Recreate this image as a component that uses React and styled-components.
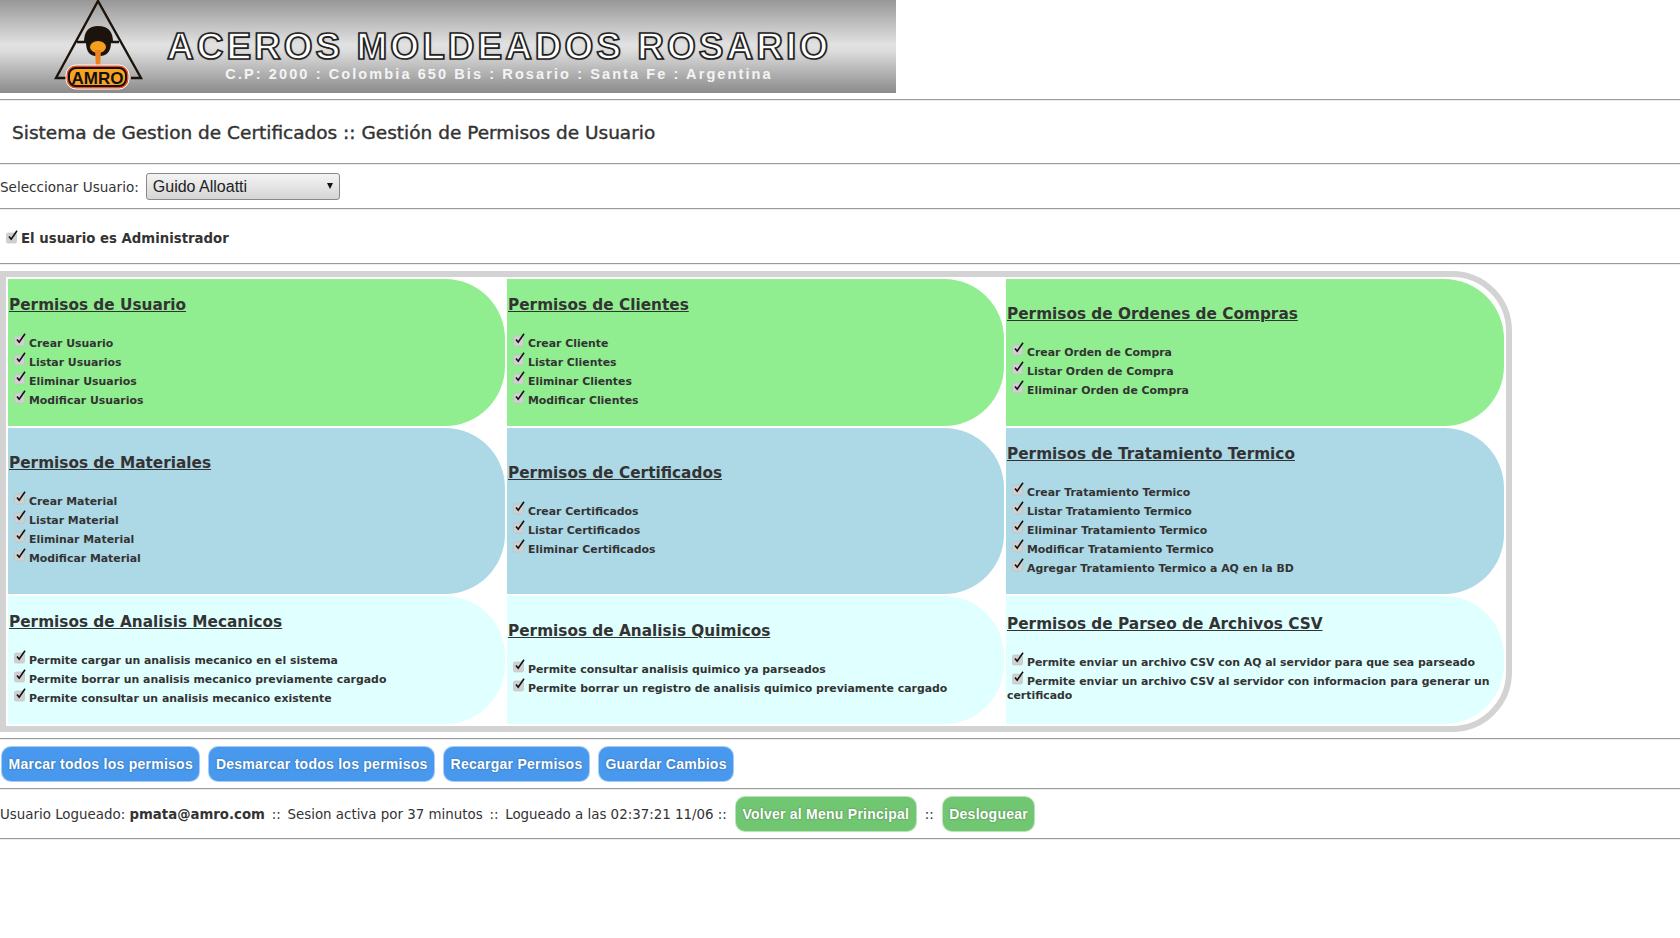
import React from 'react';
import styled, { createGlobalStyle } from 'styled-components';

const GlobalStyle = createGlobalStyle`
  html, body {
    margin: 0;
    padding: 0;
    background: #fff;
    color: #333;
    font-family: "DejaVu Sans", Verdana, sans-serif;
  }
  * { box-sizing: border-box; }
`;

const Banner = styled.header`
  width: 896px;
  height: 93px;
  display: flex;
  align-items: flex-start;
  padding-left: 54px;
  overflow: hidden;
  background: linear-gradient(180deg, #979797 0%, #e2e2e2 48%, #dcdcdc 55%, #8b8b8b 100%);
`;

const BannerText = styled.div`
  display: flex;
  flex-direction: column;
  align-items: center;
  margin-left: 20px;
  padding-top: 27px;
  width: 670px;
`;

const BannerName = styled.div`
  font-family: "Liberation Sans", Arial, sans-serif;
  font-weight: 700;
  font-size: 37px;
  line-height: 40px;
  letter-spacing: 3px;
  white-space: nowrap;
  color: #fff;
  -webkit-text-stroke: 1.7px #222;
  text-shadow: 0 0 2px #777;
`;

const BannerAddress = styled.div`
  font-family: "Liberation Sans", Arial, sans-serif;
  font-weight: 700;
  font-size: 14.5px;
  line-height: 16px;
  letter-spacing: 2.1px;
  white-space: nowrap;
  color: #f4f4f4;
  margin-top: -1px;
`;

const Rule = styled.hr`
  margin: ${(p) => p.$top || 0}px 0 ${(p) => p.$bottom || 0}px;
  border: 0;
  height: 2px;
  border-top: 1px solid #9a9a9a;
  border-bottom: 1px solid #eee;
`;

const Title = styled.h1`
  margin: 0;
  padding-left: 12px;
  height: 62px;
  display: flex;
  align-items: center;
  font-size: 18.5px;
  font-weight: 400;
  -webkit-text-stroke: 0.4px #333;
`;

const UserRow = styled.div`
  display: flex;
  align-items: center;
  gap: 7px;
  height: 43px;
  font-size: 13.55px;
`;

const SelectBox = styled.div`
  position: relative;
  width: 194px;
  height: 27px;
  padding-left: 6px;
  display: flex;
  align-items: center;
  font-family: "Liberation Sans", Arial, sans-serif;
  font-size: 16px;
  color: #222;
  border: 1px solid #888;
  border-radius: 3px;
  background: linear-gradient(180deg, #f4f4f4, #d5d5d5);

  &::after {
    content: '';
    position: absolute;
    right: 6px;
    top: 9px;
    border-left: 3px solid transparent;
    border-right: 3px solid transparent;
    border-top: 6px solid #111;
  }
`;

const AdminRow = styled.div`
  display: flex;
  align-items: center;
  height: 53px;
  padding: 3px 0 0 6px;
  font-size: 13.3px;
  font-weight: 700;
`;

const PermGrid = styled.section`
  width: 1512px;
  height: 461px;
  display: grid;
  grid-template-columns: 497px 497px 498px;
  grid-template-rows: 147px 166px 128px;
  gap: 2px;
  padding: 2px;
  border: 6px solid #d3d3d3;
  border-radius: 0 60px 60px 0;
`;

const Cell = styled.div`
  background: ${(p) => p.$bg};
  border-radius: 0 60px 60px 0;
  display: flex;
  flex-direction: column;
  justify-content: center;
  padding: 0 2px 2px 1px;
`;

const CellTitle = styled.h2`
  margin: 0 0 17px;
  font-size: 15.3px;
  line-height: 19px;
  font-weight: 700;
  text-decoration: underline;
`;

const PermLine = styled.div`
  font-size: 10.9px;
  line-height: 14px;
  font-weight: 700;
  padding-top: 5px;
  text-indent: 5px;
`;

const Tick = styled.svg`
  width: 13px;
  height: 13px;
  margin: -4px 2px 0 0;
  vertical-align: 1px;
  overflow: visible;
`;

const ButtonRow = styled.div`
  display: flex;
  gap: 8px;
  height: 36px;
  padding-left: 1px;
`;

const Pill = styled.button`
  height: 36px;
  padding: 0 6.5px;
  border: 1px solid rgba(255, 255, 255, 0.5);
  border-radius: 10px;
  background: ${(p) => p.$bg};
  color: #fff;
  font-family: "Liberation Sans", Arial, sans-serif;
  font-size: 14px;
  font-weight: 700;
  letter-spacing: 0.25px;
  text-shadow: 0 0 2px rgba(0, 0, 0, 0.4);
  white-space: nowrap;
`;

const FooterRow = styled.div`
  display: flex;
  align-items: center;
  gap: 8px;
  height: 36px;
  font-size: 13.4px;
  white-space: pre;
`;

const UserMail = styled.b`
  font-size: 13.3px;
`;

const Sep = styled.span`
  margin: 0 2.5px;
`;

const checkIcon = (
  <>
    <rect x="0.5" y="3" width="10" height="10" rx="1.5" fill="#d0d0d0" stroke="#c0c0c0" strokeWidth="0.6" />
    <path d="M3 6.4 L5.2 9.2 L11 0.8" fill="none" stroke="#111" strokeWidth="1.6" />
  </>
);

const Check = () => <Tick viewBox="0 0 13 13">{checkIcon}</Tick>;

const Logo = () => (
  <svg width="90" height="93" viewBox="0 0 90 93" style={{ flexShrink: 0 }}>
    <path d="M12 78 L2 78 L44 1 L87 78 L77 78" fill="none" stroke="#1c140c" strokeWidth="2.4" />
    <path d="M23 42 L65 42" stroke="#1c140c" strokeWidth="2.5" />
    <path d="M30 42 Q30 26 44 26 Q59 26 59 42 Z" fill="#1c140c" />
    <path d="M32 42 L57 42 Q57 55 47 56 L41 56 Q32 55 32 42 Z" fill="#1c140c" />
    <ellipse cx="44" cy="47" rx="8" ry="6" fill="#f5a01c" />
    <path d="M41 50 L47 50 L46 68 L42 68 Z" fill="#f0801c" />
    <rect x="12" y="65" width="63" height="24" rx="10" fill="#ee4f1a" stroke="#fff" strokeWidth="1" />
    <rect x="15" y="68" width="57" height="18" rx="7" fill="#f9a21f" stroke="#111" strokeWidth="2" />
    <text x="43.5" y="83.5" textAnchor="middle" fontFamily="Liberation Sans" fontWeight="700" fontSize="17" fill="#111">AMRO</text>
  </svg>
);

const cells = [
  { bg: '#90ee90', title: 'Permisos de Usuario', items: ['Crear Usuario', 'Listar Usuarios', 'Eliminar Usuarios', 'Modificar Usuarios'] },
  { bg: '#90ee90', title: 'Permisos de Clientes', items: ['Crear Cliente', 'Listar Clientes', 'Eliminar Clientes', 'Modificar Clientes'] },
  { bg: '#90ee90', title: 'Permisos de Ordenes de Compras', items: ['Crear Orden de Compra', 'Listar Orden de Compra', 'Eliminar Orden de Compra'] },
  { bg: '#add8e6', title: 'Permisos de Materiales', items: ['Crear Material', 'Listar Material', 'Eliminar Material', 'Modificar Material'] },
  { bg: '#add8e6', title: 'Permisos de Certificados', items: ['Crear Certificados', 'Listar Certificados', 'Eliminar Certificados'] },
  { bg: '#add8e6', title: 'Permisos de Tratamiento Termico', items: ['Crear Tratamiento Termico', 'Listar Tratamiento Termico', 'Eliminar Tratamiento Termico', 'Modificar Tratamiento Termico', 'Agregar Tratamiento Termico a AQ en la BD'] },
  { bg: '#e0ffff', title: 'Permisos de Analisis Mecanicos', items: ['Permite cargar un analisis mecanico en el sistema', 'Permite borrar un analisis mecanico previamente cargado', 'Permite consultar un analisis mecanico existente'] },
  { bg: '#e0ffff', title: 'Permisos de Analisis Quimicos', items: ['Permite consultar analisis quimico ya parseados', 'Permite borrar un registro de analisis quimico previamente cargado'] },
  { bg: '#e0ffff', title: 'Permisos de Parseo de Archivos CSV', items: ['Permite enviar un archivo CSV con AQ al servidor para que sea parseado', 'Permite enviar un archivo CSV al servidor con informacion para generar un certificado'] },
];

export default function App() {
  return (
    <>
      <GlobalStyle />
      <Banner>
        <Logo />
        <BannerText>
          <BannerName>ACEROS MOLDEADOS ROSARIO</BannerName>
          <BannerAddress>C.P: 2000 : Colombia 650 Bis : Rosario : Santa Fe : Argentina</BannerAddress>
        </BannerText>
      </Banner>
      <Rule $top={6} />
      <Title>Sistema de Gestion de Certificados :: Gestión de Permisos de Usuario</Title>
      <Rule />
      <UserRow>
        Seleccionar Usuario:
        <SelectBox>Guido Alloatti</SelectBox>
      </UserRow>
      <Rule />
      <AdminRow>
        <Check />
        El usuario es Administrador
      </AdminRow>
      <Rule $bottom={6} />
      <PermGrid>
        {cells.map((cell) => (
          <Cell key={cell.title} $bg={cell.bg}>
            <CellTitle>{cell.title}</CellTitle>
            {cell.items.map((item) => (
              <PermLine key={item}>
                <Check />
                {item}
              </PermLine>
            ))}
          </Cell>
        ))}
      </PermGrid>
      <Rule $top={6} $bottom={6} />
      <ButtonRow>
        <Pill $bg="#4898ee">Marcar todos los permisos</Pill>
        <Pill $bg="#4898ee">Desmarcar todos los permisos</Pill>
        <Pill $bg="#4898ee">Recargar Permisos</Pill>
        <Pill $bg="#4898ee">Guardar Cambios</Pill>
      </ButtonRow>
      <Rule $top={6} $bottom={6} />
      <FooterRow>
        <span>
          Usuario Logueado: <UserMail>pmata@amro.com</UserMail> <Sep>::</Sep> Sesion activa por 37 minutos <Sep>::</Sep> Logueado a las 02:37:21 11/06 ::
        </span>
        <Pill $bg="#71c671">Volver al Menu Principal</Pill>
        ::
        <Pill $bg="#71c671">Desloguear</Pill>
      </FooterRow>
      <Rule $top={6} />
    </>
  );
}
